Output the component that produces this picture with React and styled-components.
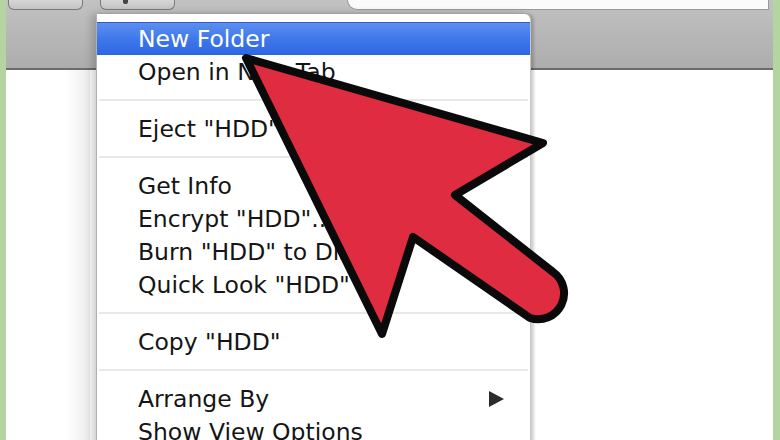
import React from "react";
import styled, { createGlobalStyle } from "styled-components";

const Global = createGlobalStyle`
  html, body {
    margin: 0;
    padding: 0;
    overflow: hidden;
    background: #fff;
  }
`;

const Frame = styled.div`
  position: relative;
  width: 780px;
  height: 440px;
  overflow: hidden;
  display: flex;
  background: #b6d4a1;
  padding: 0 7px 0 6px;
  box-sizing: border-box;
  font-family: "DejaVu Sans", "Liberation Sans", sans-serif;
`;

const Window = styled.div`
  flex: 1;
  display: flex;
  flex-direction: column;
  background: #fff;
`;

const Toolbar = styled.div`
  height: 68px;
  flex-shrink: 0;
  background: linear-gradient(#c2c2c2, #b9b9b9 40%, #adadad);
  border-bottom: 2px solid #6c6c6c;
  box-shadow: 0 1px 0 #d8d8d8;
  display: flex;
  align-items: flex-start;
  padding-left: 2px;
  gap: 17px;
`;

const ToolButton = styled.div`
  width: ${(p) => p.$w}px;
  height: 9px;
  border: 1px solid #7a7a7a;
  border-top: none;
  border-radius: 0 0 6px 6px;
  background: linear-gradient(#d6d6d6, #c4c4c4);
  display: flex;
  justify-content: center;
`;

const Glyph = styled.span`
  width: 5px;
  height: 4px;
  margin-left: -24px;
  background: #444;
  border-radius: 0 0 2px 2px;
`;

const Search = styled.div`
  margin-left: auto;
  margin-right: 4px;
  width: 420px;
  height: 9px;
  background: #fbfbfb;
  border: 1px solid #9a9a9a;
  border-top: none;
  border-radius: 0 0 0 10px;
`;

const Body = styled.div`
  flex: 1;
  display: flex;
`;

const Sidebar = styled.div`
  width: 84px;
  background: linear-gradient(90deg, #fff 70%, #ededed);
`;

const Content = styled.div`
  flex: 1;
  background: #fff;
`;

const Menu = styled.div`
  position: absolute;
  left: 96px;
  top: 14px;
  width: 433px;
  padding-top: 8px;
  background: #fff;
  border-radius: 0 6px 0 0;
  box-shadow: -4px 0 8px rgba(0, 0, 0, 0.2), 3px 0 3px rgba(0, 0, 0, 0.16);
  border-left: 1px solid #b0b0b0;
  border-right: 1px solid #c4c4c4;
`;

const Item = styled.div`
  height: 33px;
  display: flex;
  align-items: center;
  justify-content: space-between;
  padding: 0 26px 0 41px;
  font-size: 23.5px;
  color: ${(p) => (p.$active ? "#fff" : "#151515")};
  background: ${(p) =>
    p.$active ? "linear-gradient(#5b8ff0, #3f78ea 50%, #2d66e2)" : "transparent"};
  border-top: ${(p) => (p.$active ? "1px solid #3559c4" : "none")};
  box-sizing: border-box;
`;

const Separator = styled.div`
  height: 24px;
  display: flex;
  align-items: center;
  &::after {
    content: "";
    flex: 1;
    margin: 0 2px;
    height: 2px;
    background: #e8e8e8;
  }
`;

const SubArrow = styled.span`
  width: 0;
  height: 0;
  border-top: 8px solid transparent;
  border-bottom: 8px solid transparent;
  border-left: 15px solid #2b2b2b;
`;

const Pointer = styled.svg`
  position: absolute;
  left: 0;
  top: 0;
  width: 780px;
  height: 440px;
  pointer-events: none;
`;

const groups = [
  ["New Folder", "Open in New Tab"],
  ['Eject "HDD"'],
  ["Get Info", 'Encrypt "HDD"...', 'Burn "HDD" to Disc...', 'Quick Look "HDD"'],
  ['Copy "HDD"'],
  ["Arrange By", "Show View Options"],
];

export default function App() {
  return (
    <>
      <Global />
      <Frame>
        <Window>
          <Toolbar>
            <ToolButton $w={73} />
            <ToolButton $w={73}>
              <Glyph />
            </ToolButton>
            <Search />
          </Toolbar>
          <Body>
            <Sidebar />
            <Content />
          </Body>
        </Window>
        <Menu>
          {groups.map((g, gi) => (
            <React.Fragment key={gi}>
              {gi > 0 && <Separator />}
              {g.map((label) => (
                <Item key={label} $active={label === "New Folder"}>
                  <span>{label}</span>
                  {label === "Arrange By" && <SubArrow />}
                </Item>
              ))}
            </React.Fragment>
          ))}
        </Menu>
        <Pointer viewBox="0 0 780 440">
          <path
            d="M246 58 L543 143 L455 195 L553 272 A26 26 0 0 1 530 318 L413 237 L382 334 Z"
            fill="#df2c40"
            stroke="#0a0a0a"
            strokeWidth="8"
            strokeLinejoin="round"
          />
        </Pointer>
      </Frame>
    </>
  );
}
